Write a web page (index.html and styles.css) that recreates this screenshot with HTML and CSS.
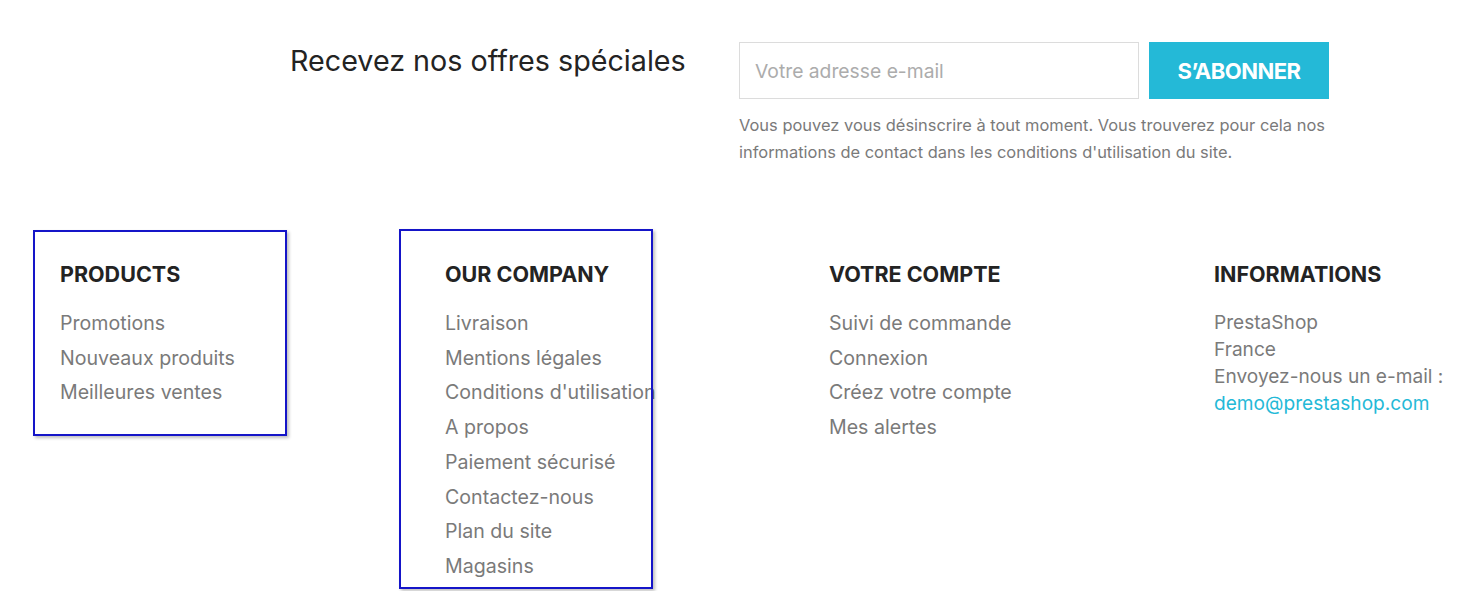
FILE: index.html
```html
<!DOCTYPE html>
<html lang="fr">
<head>
<meta charset="utf-8">
<title>Footer</title>
<link rel="stylesheet" href="styles.css">
</head>
<body>
<section class="newsletter">
  <h2 class="nl-title">Recevez nos offres spéciales</h2>
  <div class="nl-form">
    <div class="nl-row">
      <input class="nl-input" type="text" placeholder="Votre adresse e-mail">
      <button class="nl-btn">S’ABONNER</button>
    </div>
    <p class="nl-note">Vous pouvez vous désinscrire à tout moment. Vous trouverez pour cela nos informations de contact dans les conditions d'utilisation du site.</p>
  </div>
</section>
<footer class="links">
  <div class="col">
    <div class="hl hl-1"></div>
    <h3 class="col-title">PRODUCTS</h3>
    <ul class="list">
      <li><a href="#">Promotions</a></li>
      <li><a href="#">Nouveaux produits</a></li>
      <li><a href="#">Meilleures ventes</a></li>
    </ul>
  </div>
  <div class="col">
    <div class="hl hl-2"></div>
    <h3 class="col-title">OUR COMPANY</h3>
    <ul class="list">
      <li><a href="#">Livraison</a></li>
      <li><a href="#">Mentions légales</a></li>
      <li><a href="#">Conditions d'utilisation</a></li>
      <li><a href="#">A propos</a></li>
      <li><a href="#">Paiement sécurisé</a></li>
      <li><a href="#">Contactez-nous</a></li>
      <li><a href="#">Plan du site</a></li>
      <li><a href="#">Magasins</a></li>
    </ul>
  </div>
  <div class="col">
    <h3 class="col-title">VOTRE COMPTE</h3>
    <ul class="list">
      <li><a href="#">Suivi de commande</a></li>
      <li><a href="#">Connexion</a></li>
      <li><a href="#">Créez votre compte</a></li>
      <li><a href="#">Mes alertes</a></li>
    </ul>
  </div>
  <div class="col">
    <h3 class="col-title">INFORMATIONS</h3>
    <div class="info">
      PrestaShop<br>
      France<br>
      Envoyez-nous un e-mail :<br>
      <a class="mail" href="#">demo@prestashop.com</a>
    </div>
  </div>
</footer>
</body>
</html>
```
FILE: styles.css
```css
html, body {
  margin: 0;
  padding: 0;
  background: #fff;
  overflow: hidden;
}
body {
  font-family: Inter, "Noto Sans", sans-serif;
  color: #7a7a7a;
  width: 1482px;
  height: 591px;
}
.newsletter {
  display: flex;
  padding: 42px 0 0 290px;
}
.nl-title {
  margin: 0;
  width: 449px;
  font-weight: 400;
  font-size: 28.7px;
  line-height: 36px;
  color: #232323;
  padding-top: 1px;
}
.nl-form {
  width: 590px;
}
.nl-row {
  display: flex;
  gap: 10px;
}
.nl-input {
  box-sizing: border-box;
  width: 400px;
  height: 57px;
  border: 1px solid #dcdcdc;
  padding: 0 15px;
  font-family: inherit;
  font-size: 19.3px;
  color: #333;
  outline: none;
}
.nl-input::placeholder {
  color: #acacac;
}
.nl-btn {
  width: 180px;
  height: 57px;
  border: 0;
  background: #24b9d7;
  color: #fff;
  font-family: inherit;
  font-weight: 700;
  font-size: 22px;
  letter-spacing: -0.5px;
  padding: 0;
}
.nl-note {
  margin: 13px 0 0;
  font-size: 16.45px;
  line-height: 27px;
  color: #7a7a7a;
}
.links {
  display: grid;
  grid-template-columns: 385px 384px 385px 1fr;
  padding: 259px 0 0 60px;
  position: absolute;
  top: 0;
  left: 0;
  right: 0;
}
.col {
  position: relative;
}
.hl {
  position: absolute;
  border: 2px solid #1515c8;
  box-shadow: 2px 2px 3px rgba(0, 0, 0, 0.25);
}
.hl-1 {
  left: -27px;
  top: -29px;
  width: 250px;
  height: 202px;
}
.hl-2 {
  left: -46px;
  top: -30px;
  width: 250px;
  height: 356px;
}
.col-title {
  margin: 0;
  font-size: 21.5px;
  font-weight: 700;
  line-height: 30px;
  color: #232323;
  letter-spacing: 0;
}
.list {
  list-style: none;
  margin: 17px 0 0;
  padding: 0;
}
.list li {
  line-height: 34.7px;
  font-size: 19.6px;
}
.list a, .info {
  color: #7a7a7a;
  text-decoration: none;
}
.info {
  margin-top: 20px;
  font-size: 19.1px;
  line-height: 27px;
}
.info .mail {
  color: #24b9d7;
  text-decoration: none;
}
```
